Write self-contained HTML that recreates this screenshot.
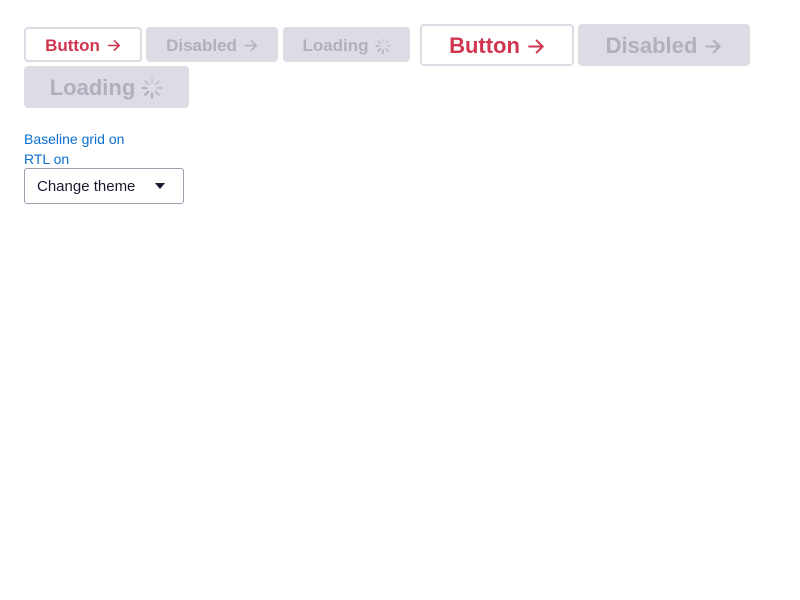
<!DOCTYPE html>
<html><head><style>
body{margin:0;background:#fff;font-family:"Liberation Sans",sans-serif;}
.b{position:absolute;box-sizing:border-box;border-radius:4px;font-weight:bold;display:flex;align-items:center;justify-content:center;gap:6px;padding-top:2px;}
.p{border:2px solid #dcdce4;background:#fff;color:#d0364f;}
.d{background:#dcdce4;color:#b0b0be;}
.s{font-size:17px;height:35px;top:27px;}
.l{font-size:22px;}
.t{position:absolute;left:24px;color:#0a6ed1;font-size:14px;}
.sel{position:absolute;left:24px;top:168px;width:160px;height:36px;box-sizing:border-box;border:1px solid #a0a0b0;border-radius:3px;font-size:15px;color:#1a1a2e;padding:0 18px 0 12px;display:flex;align-items:center;justify-content:space-between;}
svg{display:block}
</style></head><body>
<svg width="0" height="0" style="position:absolute"><defs>
<symbol id="ar" viewBox="0 0 16 16"><path d="M2 8H14M8.5 2.5L14 8L8.5 13.5" fill="none" stroke="currentColor" stroke-width="1.7"/></symbol>
<symbol id="sp" viewBox="0 0 16 16"><g stroke="currentColor" stroke-width="1.6" stroke-linecap="round" fill="none">
<path d="M8 1v3" opacity=".3"/><path d="M12.9 3.1l-2.1 2.1" opacity=".45"/><path d="M15 8h-3" opacity=".6"/><path d="M12.9 12.9l-2.1-2.1" opacity=".75"/><path d="M8 15v-3"/><path d="M3.1 12.9l2.1-2.1"/><path d="M1 8h3" opacity=".9"/><path d="M3.1 3.1l2.1 2.1" opacity=".6"/></g></symbol>
</defs></svg>
<div class="b p s" style="left:24px;width:118px">Button <svg width="15" height="15"><use href="#ar"/></svg></div>
<div class="b d s" style="left:146px;width:132px">Disabled <svg width="15" height="15"><use href="#ar"/></svg></div>
<div class="b d s" style="left:283px;width:127px">Loading <svg width="16" height="16"><use href="#sp"/></svg></div>
<div class="b p l" style="left:420px;top:24px;width:154px;height:42px">Button <svg width="19" height="19"><use href="#ar"/></svg></div>
<div class="b d l" style="left:578px;top:24px;width:172px;height:42px">Disabled <svg width="19" height="19"><use href="#ar"/></svg></div>
<div class="b d l" style="left:24px;top:66px;width:165px;height:42px">Loading <svg width="22" height="22"><use href="#sp"/></svg></div>
<div class="t" style="top:131px">Baseline grid on</div>
<div class="t" style="top:151px">RTL on</div>
<div class="sel"><span>Change theme</span><svg width="10" height="6"><path d="M0 0H10L5 6Z" fill="#1a1a2e"/></svg></div>
</body></html>
